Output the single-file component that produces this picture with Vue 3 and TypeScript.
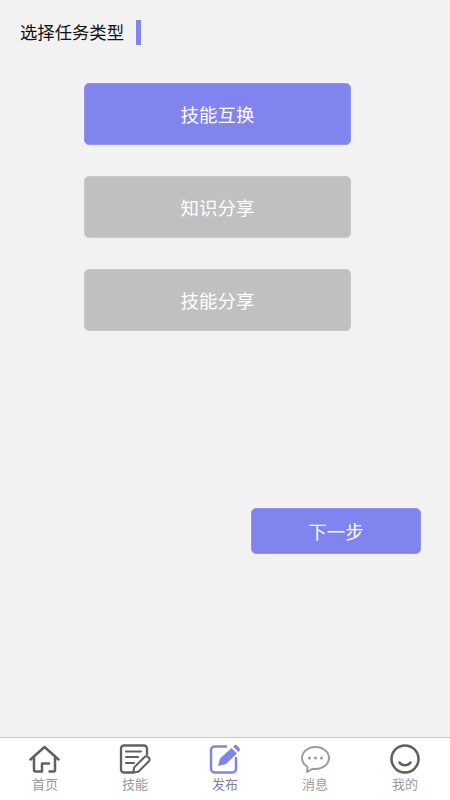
<template>
  <div class="page">
    <main class="content">
      <header class="title-row">
        <h1>选择任务类型</h1>
        <span class="title-mark" />
      </header>

      <div class="types">
        <button
          v-for="t in types"
          :key="t"
          type="button"
          class="type-btn"
          :class="{ 'type-btn--active': t === selected }"
          @click="selected = t"
        >
          {{ t }}
        </button>
      </div>

      <div class="next-row">
        <button type="button" class="next-btn">下一步</button>
      </div>
    </main>

    <nav class="tabbar">
      <a class="tab">
        <svg viewBox="0 0 32 30" class="icon">
          <path d="M1.500 15.500 15.500 3l14 12.500" fill="none" stroke="#606060" stroke-width="2.500" stroke-linecap="round" stroke-linejoin="round" />
          <path d="M5 14v12a1.500 1.500 0 0 0 1.500 1.500H13v-8h7M26 14v12a1.500 1.500 0 0 1-1.500 1.500h-4" fill="none" stroke="#606060" stroke-width="2.500" stroke-linecap="round" stroke-linejoin="round" />
        </svg>
        <span>首页</span>
      </a>
      <a class="tab">
        <svg viewBox="0 0 32 30" class="icon">
          <path d="M13 28.500H5a3 3 0 0 1-3-3V4.500a3 3 0 0 1 3-3h20a3 3 0 0 1 3 3v6" fill="none" stroke="#606060" stroke-width="2.300" stroke-linecap="round" />
          <path d="M7 7.500h15M7 13h12M7 19h8" fill="none" stroke="#606060" stroke-width="2" stroke-linecap="round" />
          <path d="M14 28.800l1.300-5.600L25.600 13a2.400 2.400 0 0 1 3.400 0l.9.9a2.400 2.400 0 0 1 0 3.400L19.600 27.500z" fill="#fff" stroke="#606060" stroke-width="2" stroke-linejoin="round" />
        </svg>
        <span>技能</span>
      </a>
      <a class="tab tab--active">
        <svg viewBox="0 0 32 30" class="icon">
          <path d="M27 14v11a3.500 3.500 0 0 1-3.500 3.500H5.500A3.500 3.500 0 0 1 2 25V6a3.500 3.500 0 0 1 3.500-3.500H17" fill="none" stroke="#8183ee" stroke-width="2.500" stroke-linecap="round" />
          <path d="M9 22l2-7.500L22.500 4l5.500 5.500L17 20z" fill="#8183ee" />
          <path d="M24 2.500l1.200-1a2 2 0 0 1 2.800 0l2.400 2.400a2 2 0 0 1 0 2.800L29.400 8z" fill="#8183ee" />
        </svg>
        <span>发布</span>
      </a>
      <a class="tab">
        <svg viewBox="0 0 32 30" class="icon">
          <path d="M16.500 3C9 3 3 7.700 3 14c0 3.900 2.200 7 5.600 9l-.6 5 5.500-3.300c1 .2 2 .3 3 .3 7.500 0 13.500-4.700 13.500-11S24 3 16.500 3z" fill="none" stroke="#9a9a9a" stroke-width="1.900" stroke-linejoin="round" />
          <circle cx="10.500" cy="14" r="1.500" fill="#9a9a9a" />
          <circle cx="16.500" cy="14" r="1.500" fill="#9a9a9a" />
          <circle cx="22.500" cy="14" r="1.500" fill="#9a9a9a" />
        </svg>
        <span>消息</span>
      </a>
      <a class="tab">
        <svg viewBox="0 0 32 30" class="icon">
          <circle cx="16" cy="15" r="13.500" fill="none" stroke="#606060" stroke-width="2.500" />
          <path d="M10.500 18.500c1.400 1.900 3.200 2.800 5.500 2.800s4.100-.9 5.500-2.800" fill="none" stroke="#606060" stroke-width="2.500" stroke-linecap="round" />
        </svg>
        <span>我的</span>
      </a>
    </nav>
  </div>
</template>

<script setup lang="ts">
import { ref } from 'vue'

const types = ['技能互换', '知识分享', '技能分享']
const selected = ref('技能互换')
</script>

<style scoped>
.page {
  width: 450px;
  height: 800px;
  display: flex;
  flex-direction: column;
  background: #f2f2f3;
  font-family: "Noto Sans CJK SC", "Liberation Sans", sans-serif;
  overflow: hidden;
}

.content {
  flex: 1;
  padding: 19px 29px 0 0;
}

.title-row {
  display: flex;
  align-items: center;
  gap: 12px;
  padding-left: 20px;
  height: 26px;
}

.title-row h1 {
  margin: 0;
  font-size: 17.330px;
  font-weight: 400;
  color: #111;
  line-height: 26px;
}

.title-mark {
  width: 5px;
  height: 25px;
  background: #8183ee;
}

.types {
  display: flex;
  flex-direction: column;
  gap: 31px;
  margin: 38px 0 0 84px;
  width: 267px;
}

.type-btn {
  height: 62px;
  padding: 0;
  border: 1px solid #c9c9c9;
  border-radius: 5px;
  background: #c0c0c0;
  color: #fff;
  font: inherit;
  font-size: 18.500px;
}

.type-btn--active {
  background: #8183ee;
  border-color: #9092f2;
}

.next-row {
  display: flex;
  justify-content: flex-end;
  margin-top: 177px;
}

.next-btn {
  width: 170px;
  height: 46px;
  padding: 0;
  border: 1px solid #9092f2;
  border-radius: 5px;
  background: #8183ee;
  color: #fff;
  font: inherit;
  font-size: 18.500px;
}

.tabbar {
  height: 63px;
  display: grid;
  grid-template-columns: repeat(5, 90px);
  background: #fff;
  border-top: 1px solid #c8c8c8;
  box-sizing: border-box;
}

.tab {
  display: flex;
  flex-direction: column;
  align-items: center;
  padding-top: 6px;
  font-size: 13px;
  line-height: 17px;
  color: #9a9a9a;
}

.tab--active {
  color: #7e7ea8;
}

.icon {
  width: 32px;
  height: 30px;
  margin-bottom: 1px;
}
</style>

<style>
html,
body {
  margin: 0;
  background: #f2f2f3;
}
</style>
